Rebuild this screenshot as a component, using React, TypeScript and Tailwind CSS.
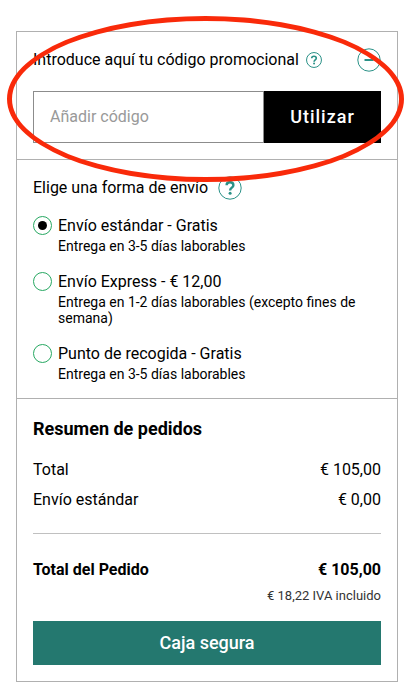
import { useState } from 'react';

const shippingMethods = [
  { id: 'standard', title: 'Envío estándar - Gratis', desc: 'Entrega en 3-5 días laborables' },
  { id: 'express', title: 'Envío Express - € 12,00', desc: 'Entrega en 1-2 días laborables (excepto fines de semana)' },
  { id: 'pickup', title: 'Punto de recogida - Gratis', desc: 'Entrega en 3-5 días laborables' },
];

function HelpIcon({ className }: { className: string }) {
  return (
    <svg viewBox="0 0 24 24" fill="none" stroke="currentColor" className={className} aria-hidden="true">
      <circle cx="12" cy="12" r="11.2" strokeWidth="1" vectorEffect="non-scaling-stroke" />
      <path d="M8.6 9.3C8.6 7.3 10 6.3 12 6.3c2.1 0 3.4 1.1 3.4 2.9 0 2.4-3.3 2.6-3.3 5.3" strokeWidth="2.4" />
      <circle cx="12.1" cy="17.3" r="1.5" fill="currentColor" stroke="none" />
    </svg>
  );
}

export default function App() {
  const [shipping, setShipping] = useState('standard');

  return (
    <div className="min-h-screen bg-white pt-[31px] pr-3.5 pb-2 pl-4 font-['Roboto',sans-serif] text-base text-black">
      <main className="border border-[#b0b0b0]">
        {/* Promo code */}
        <section className="relative border-b border-[#b0b0b0] p-4">
          <div className="mb-[19px] flex h-6 items-center">
            <label htmlFor="promo">Introduce aquí tu código promocional</label>
            <button type="button" aria-label="Ayuda" className="ml-[7px] text-[#2a9187]">
              <HelpIcon className="size-4" />
            </button>
            <button type="button" aria-label="Cerrar" className="ml-auto text-[#2a9187]">
              <svg viewBox="0 0 24 24" fill="none" stroke="currentColor" className="size-6" aria-hidden="true">
                <circle cx="12" cy="12" r="11.2" strokeWidth="1" />
                <path d="M7.5 12h9" strokeWidth="2" />
              </svg>
            </button>
          </div>
          <div className="flex h-13">
            <input
              id="promo"
              type="text"
              placeholder="Añadir código"
              className="min-w-0 flex-1 border border-[#8c8c8c] px-4 outline-none placeholder:text-[#999]"
            />
            <button type="button" className="w-[117px] bg-black text-lg font-medium tracking-[1px] text-white">
              Utilizar
            </button>
          </div>
          {/* Highlight ring */}
          <div className="pointer-events-none absolute -top-4 -right-[7px] -left-[10px] h-[166px] rounded-[50%] border-5 border-[#f92a0a]" />
        </section>

        {/* Shipping */}
        <section className="border-b border-[#b0b0b0] p-4">
          <div className="mb-3.5 flex h-6 items-center">
            <h2>Elige una forma de envío</h2>
            <button type="button" aria-label="Ayuda" className="ml-2.5 text-[#2a9187]">
              <HelpIcon className="size-6" />
            </button>
          </div>
          <div className="space-y-4">
            {shippingMethods.map((item) => (
              <label key={item.id} className="flex gap-1.5">
                <input
                  type="radio"
                  name="shipping"
                  checked={shipping === item.id}
                  onChange={() => setShipping(item.id)}
                  className="mt-0.5 size-[19px] shrink-0 appearance-none rounded-full border border-[#27a862] bg-clip-content p-1 checked:bg-black"
                />
                <span>
                  <span className="block leading-6">{item.title}</span>
                  <span className="block text-sm leading-4">{item.desc}</span>
                </span>
              </label>
            ))}
          </div>
        </section>

        {/* Summary */}
        <section className="p-4">
          <h2 className="mb-3 text-lg leading-7 font-bold">Resumen de pedidos</h2>
          <dl>
            <div className="flex justify-between leading-[30px]">
              <dt>Total</dt>
              <dd>€ 105,00</dd>
            </div>
            <div className="flex justify-between leading-[30px]">
              <dt>Envío estándar</dt>
              <dd>€ 0,00</dd>
            </div>
            <div className="mt-[18px] flex justify-between border-t border-[#c0c0c0] pt-6 font-bold">
              <dt>Total del Pedido</dt>
              <dd>€ 105,00</dd>
            </div>
          </dl>
          <p className="mt-1 text-right text-[13px] leading-5 text-[#333]">€ 18,22 IVA incluido</p>
          <button type="button" className="mt-[15px] h-11 w-full bg-[#24786f] text-lg font-medium text-white">
            Caja segura
          </button>
        </section>
      </main>
    </div>
  );
}
